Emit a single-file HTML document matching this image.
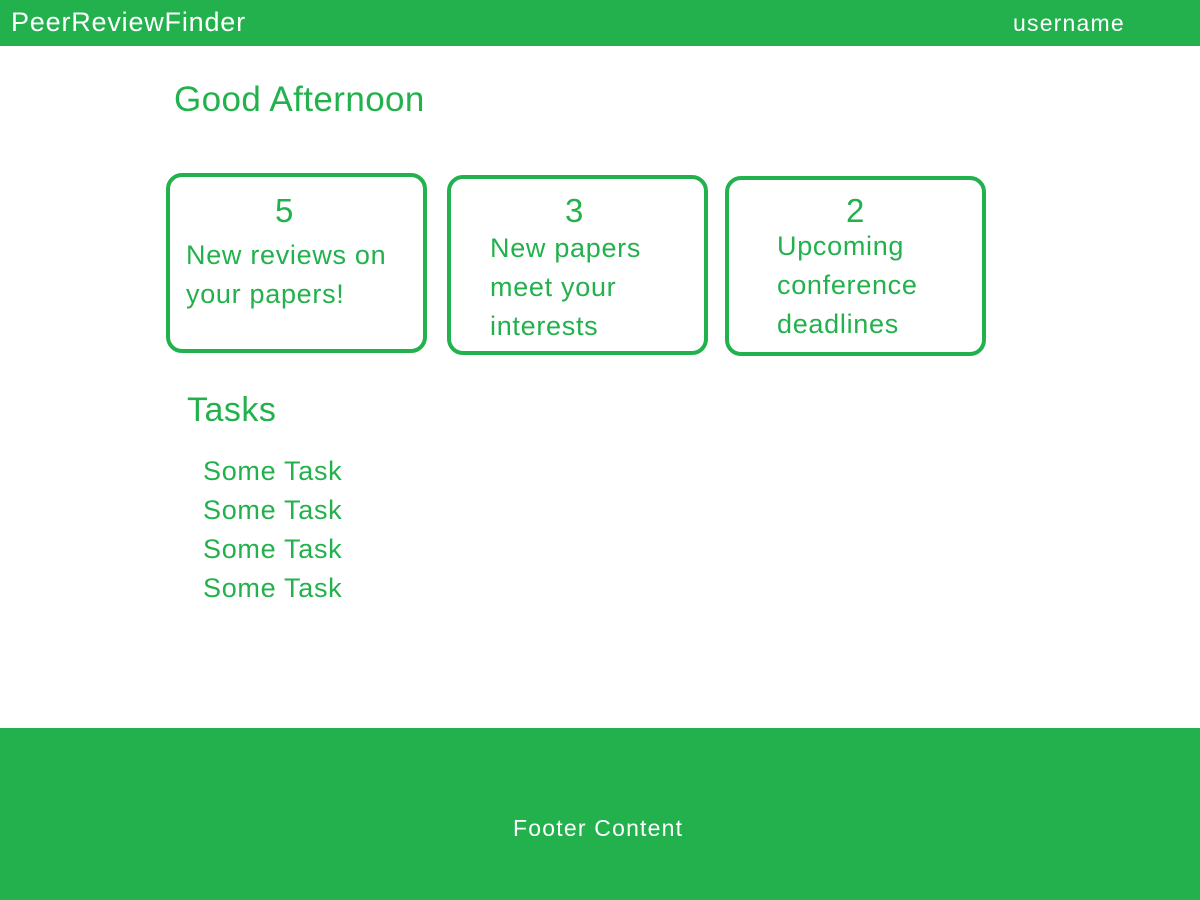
<!DOCTYPE html>
<html><head><style>
body{margin:0;width:1200px;height:900px;position:relative;background:#fff;font-family:"Liberation Sans",sans-serif;color:#22b14c;overflow:hidden}
.a{position:absolute;white-space:nowrap}
.hdr{position:absolute;left:0;top:0;width:1200px;height:46px;background:#22b14c}
.ftr{position:absolute;left:0;top:728px;width:1200px;height:172px;background:#22b14c}
.card{position:absolute;border:4px solid #22b14c;border-radius:16px;box-sizing:border-box}
.t{font-size:27px;line-height:39px;letter-spacing:0.7px}
</style></head><body>
<div class="hdr"></div>
<div class="a" style="left:11px;top:7px;font-size:27px;letter-spacing:0.8px;color:#fff">PeerReviewFinder</div>
<div class="a" style="left:1013px;top:10px;font-size:23px;letter-spacing:1.2px;color:#fff">username</div>
<div class="a" style="left:174px;top:80px;font-size:35px;letter-spacing:0.4px">Good Afternoon</div>
<div class="card" style="left:166px;top:173px;height:180px;width:261px"></div>
<div class="card" style="left:447px;top:175px;height:180px;width:261px"></div>
<div class="card" style="left:725px;top:176px;height:180px;width:261px"></div>
<div class="a" style="left:275px;top:192px;font-size:33px">5</div>
<div class="a t" style="left:186px;top:236px">New reviews on<br>your papers!</div>
<div class="a" style="left:565px;top:192px;font-size:33px">3</div>
<div class="a t" style="left:490px;top:229px">New papers<br>meet your<br>interests</div>
<div class="a" style="left:846px;top:192px;font-size:33px">2</div>
<div class="a t" style="left:777px;top:227px">Upcoming<br>conference<br>deadlines</div>
<div class="a" style="left:187px;top:391px;font-size:34px;letter-spacing:0.5px">Tasks</div>
<div class="a t" style="left:203px;top:452px">Some Task<br>Some Task<br>Some Task<br>Some Task</div>
<div class="ftr"></div>
<div class="a" style="left:513px;top:815px;font-size:23px;letter-spacing:1.2px;color:#fff">Footer Content</div>
</body></html>
